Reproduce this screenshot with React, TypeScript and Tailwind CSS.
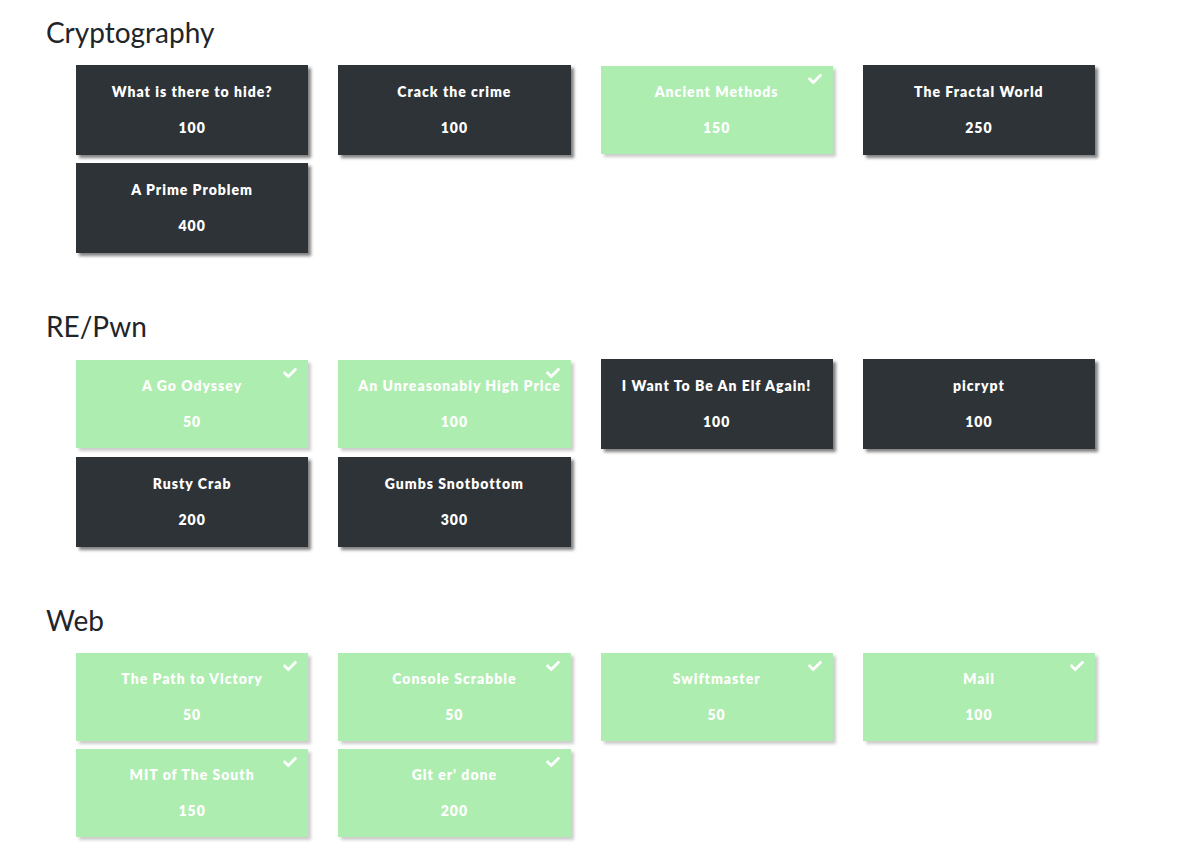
import { FaCheck } from "react-icons/fa";

type Challenge = { name: string; value: number; solved?: boolean };
type Category = { title: string; challenges: Challenge[] };

const categories: Category[] = [
  {
    title: "Cryptography",
    challenges: [
      { name: "What is there to hide?", value: 100 },
      { name: "Crack the crime", value: 100 },
      { name: "Ancient Methods", value: 150, solved: true },
      { name: "The Fractal World", value: 250 },
      { name: "A Prime Problem", value: 400 },
    ],
  },
  {
    title: "RE/Pwn",
    challenges: [
      { name: "A Go Odyssey", value: 50, solved: true },
      { name: "An Unreasonably High Price", value: 100, solved: true },
      { name: "I Want To Be An Elf Again!", value: 100 },
      { name: "picrypt", value: 100 },
      { name: "Rusty Crab", value: 200 },
      { name: "Gumbs Snotbottom", value: 300 },
    ],
  },
  {
    title: "Web",
    challenges: [
      { name: "The Path to Victory", value: 50, solved: true },
      { name: "Console Scrabble", value: 50, solved: true },
      { name: "Swiftmaster", value: 50, solved: true },
      { name: "Mail", value: 100, solved: true },
      { name: "MIT of The South", value: 150, solved: true },
      { name: "Git er' done", value: 200, solved: true },
    ],
  },
];

function ChallengeCard({ name, value, solved }: Challenge) {
  return (
    <button
      type="button"
      className={
        solved
          ? "relative h-[88px] bg-[#adedaf] px-5 text-white shadow-[3px_3px_3px_#cccccc]"
          : "relative h-[90px] bg-[#2e3337] px-5 text-white shadow-[3px_3px_3px_#808080]"
      }
    >
      {solved && <FaCheck aria-label="Solved" className="absolute top-[6px] right-[11px] size-[14px]" />}
      <span className="mb-3 block text-[14px] leading-6 font-extrabold tracking-[1px] whitespace-nowrap">{name}</span>
      <span className="block text-[14px] leading-6 font-extrabold tracking-[1px]">{value}</span>
    </button>
  );
}

export default function App() {
  return (
    <main className="bg-white pt-[15px] pr-[82px] pl-[46px] font-['Lato',sans-serif] text-[#212529]">
      {categories.map((category) => (
        <section key={category.title} className="mb-14">
          <h3 className="mb-4 text-[28px] leading-[34px]">{category.title}</h3>
          <div className="ml-[30px] grid grid-cols-4 items-center gap-x-[30px] gap-y-2">
            {category.challenges.map((challenge) => (
              <ChallengeCard key={challenge.name} {...challenge} />
            ))}
          </div>
        </section>
      ))}
    </main>
  );
}
